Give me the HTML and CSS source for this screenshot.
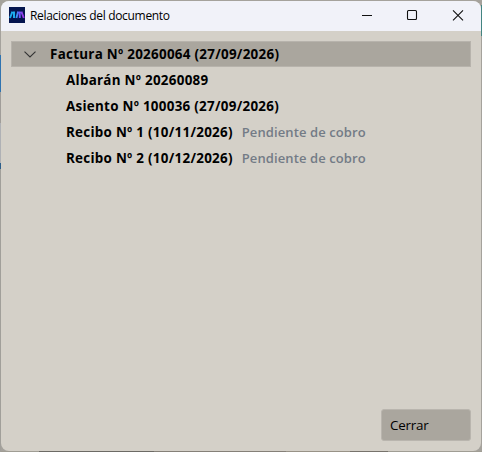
FILE: index.html
```html
<!DOCTYPE html>
<html lang="es">
<head>
<meta charset="utf-8">
<title>Relaciones del documento</title>
<link rel="stylesheet" href="styles.css">
</head>
<body>
<div class="window">
  <header class="titlebar">
    <svg class="logo" width="16" height="16" viewBox="0 0 16 16">
      <defs><linearGradient id="g" gradientUnits="userSpaceOnUse" x1="0" y1="0" x2="16" y2="0"><stop offset="0" stop-color="#18a8e8"/><stop offset=".4" stop-color="#20b8f8"/><stop offset=".6" stop-color="#6060f8"/><stop offset="1" stop-color="#b028e0"/></linearGradient></defs>
      <rect width="16" height="16" fill="#05154f"/>
      <path d="M1 11 3.4 4.6M5 4.6V11M7.4 11 9.2 4.6M10.8 4.6V11M12.4 4.6 14.8 11" fill="none" stroke="url(#g)" stroke-width="1.9"/>
    </svg>
    <h1 class="title">Relaciones del documento</h1>
    <div class="controls">
      <svg width="46" height="30" viewBox="0 0 46 30"><path d="M19 14.5h10"/></svg>
      <svg width="45" height="30" viewBox="0 0 45 30"><rect x="18.5" y="9.5" width="9" height="9" rx="1"/></svg>
      <svg width="47" height="30" viewBox="0 0 47 30"><path d="M19 9.3l10 10M29 9.3l-10 10"/></svg>
    </div>
  </header>
  <main class="tree">
    <div class="row root">
      <svg class="chevron" width="12" height="7" viewBox="0 0 12 7"><path d="M.5 .7 6 6 11.5 .7"/></svg>
      <span class="name">Factura Nº 20260064 (27/09/2026)</span>
    </div>
    <div class="row child"><span class="name">Albarán Nº 20260089</span></div>
    <div class="row child"><span class="name">Asiento Nº 100036 (27/09/2026)</span></div>
    <div class="row child"><span class="name">Recibo Nº 1 (10/11/2026)</span><span class="status">Pendiente de cobro</span></div>
    <div class="row child"><span class="name">Recibo Nº 2 (10/12/2026)</span><span class="status">Pendiente de cobro</span></div>
  </main>
  <footer class="footer"><button class="close">Cerrar</button></footer>
</div>
</body>
</html>
```
FILE: styles.css
```css
* { box-sizing: border-box; }
body {
  margin: 0;
  width: 482px;
  height: 452px;
  padding: 1px;
  overflow: hidden;
  font-family: "Open Sans", "Noto Sans", sans-serif;
  color: #000;
  background:
    linear-gradient(#a5a29c 0 55px, #2f73b0 55px 92px, #a09d99 92px 123px, #afb1b5 123px 163px, #2d5f8b 163px 169px, #a19f9a 169px) 0 0 / 1px 100% no-repeat,
    linear-gradient(90deg, #a09d94 0 39px, #6c6a65 39px 154px, #858078 154px 286px, #989287 286px 350px, #77736c 350px 388px, #a09d94 388px) 0 100% / 100% 1px no-repeat,
    linear-gradient(#a5a29c 0 5px, #438481 5px 36px, #a5a29c 36px) 100% 0 / 1px 100% no-repeat,
    #a5a29c;
}
.window {
  display: flex;
  flex-direction: column;
  width: 480px;
  height: 450px;
  overflow: hidden;
  border-radius: 8px;
  background: #d4d0c8;
}
.titlebar {
  display: flex;
  align-items: center;
  height: 30px;
  flex: none;
  padding-left: 8px;
  background: #f1f2f9;
}
.logo { flex: none; margin-top: -2px; }
.title {
  margin: 0 0 0 5px;
  font-size: 12px;
  font-weight: 400;
  line-height: 18px;
  letter-spacing: -0.32px;
  white-space: nowrap;
}
.controls { display: flex; margin-left: auto; }
.controls svg { fill: none; stroke: #111; stroke-width: 1.1; }
.tree { flex: 1; padding: 10px 10px 0; }
.row {
  display: flex;
  align-items: center;
  height: 26px;
  font-size: 13px;
  line-height: 18px;
  white-space: nowrap;
}
.root {
  padding-left: 12px;
  border: 1px solid #b7b3ac;
  background: #aaa69e;
}
.chevron { fill: none; stroke: #333; stroke-width: 1.1; margin-right: 14px; }
.child { padding-left: 55px; }
.name { font-weight: 700; font-size: 13.4px; letter-spacing: 0.28px; }
.status { margin-left: 9px; font-weight: 600; letter-spacing: 0.1px; color: #737b86; }
.footer { display: flex; justify-content: flex-end; padding: 0 10px 10px; }
.close {
  width: 90px;
  height: 32px;
  padding: 0 8px;
  border: 1px solid #b9b5ae;
  border-radius: 3px;
  background: #aaa69e;
  color: #000;
  font: 400 13.4px/20px "Open Sans", "Noto Sans", sans-serif;
  letter-spacing: -0.2px;
  text-align: left;
}
```
